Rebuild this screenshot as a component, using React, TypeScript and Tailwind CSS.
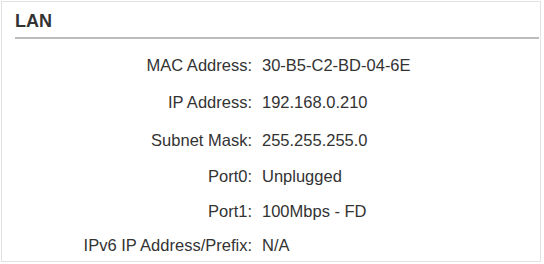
import React from "react";

const rows: [string, string, string][] = [
  ["MAC Address:", "30-B5-C2-BD-04-6E", "h-[37px]"],
  ["IP Address:", "192.168.0.210", "h-[37px]"],
  ["Subnet Mask:", "255.255.255.0", "h-[38px]"],
  ["Port0:", "Unplugged", "h-[35px]"],
  ["Port1:", "100Mbps - FD", "h-[34px]"],
  ["IPv6 IP Address/Prefix:", "N/A", "h-[34px]"],
];

export default function App() {
  return (
    <div
      className="w-[544px] h-[264px] bg-white pt-[1px] pl-[1px]"
      style={{ fontFamily: '"Liberation Sans", Arial, sans-serif' }}
    >
      <div className="w-[540px] h-[261px] border border-[#e2e2e2] pl-[13px] pr-[1px]">
        <div className="h-[37px] border-b-2 border-[#bcbcbc] flex items-center">
          <span className="text-[18px] font-bold text-[#333] leading-none pt-[2px]">LAN</span>
        </div>
        <div className="pt-[8px] flex flex-col">
          {rows.map(([label, value, h]) => (
            <div key={label} className={`${h} flex items-center text-[16.5px] text-[#333] leading-none`}>
              <div className="w-[237px] text-right">{label}</div>
              <div className="ml-[10px]">{value}</div>
            </div>
          ))}
        </div>
      </div>
    </div>
  );
}
